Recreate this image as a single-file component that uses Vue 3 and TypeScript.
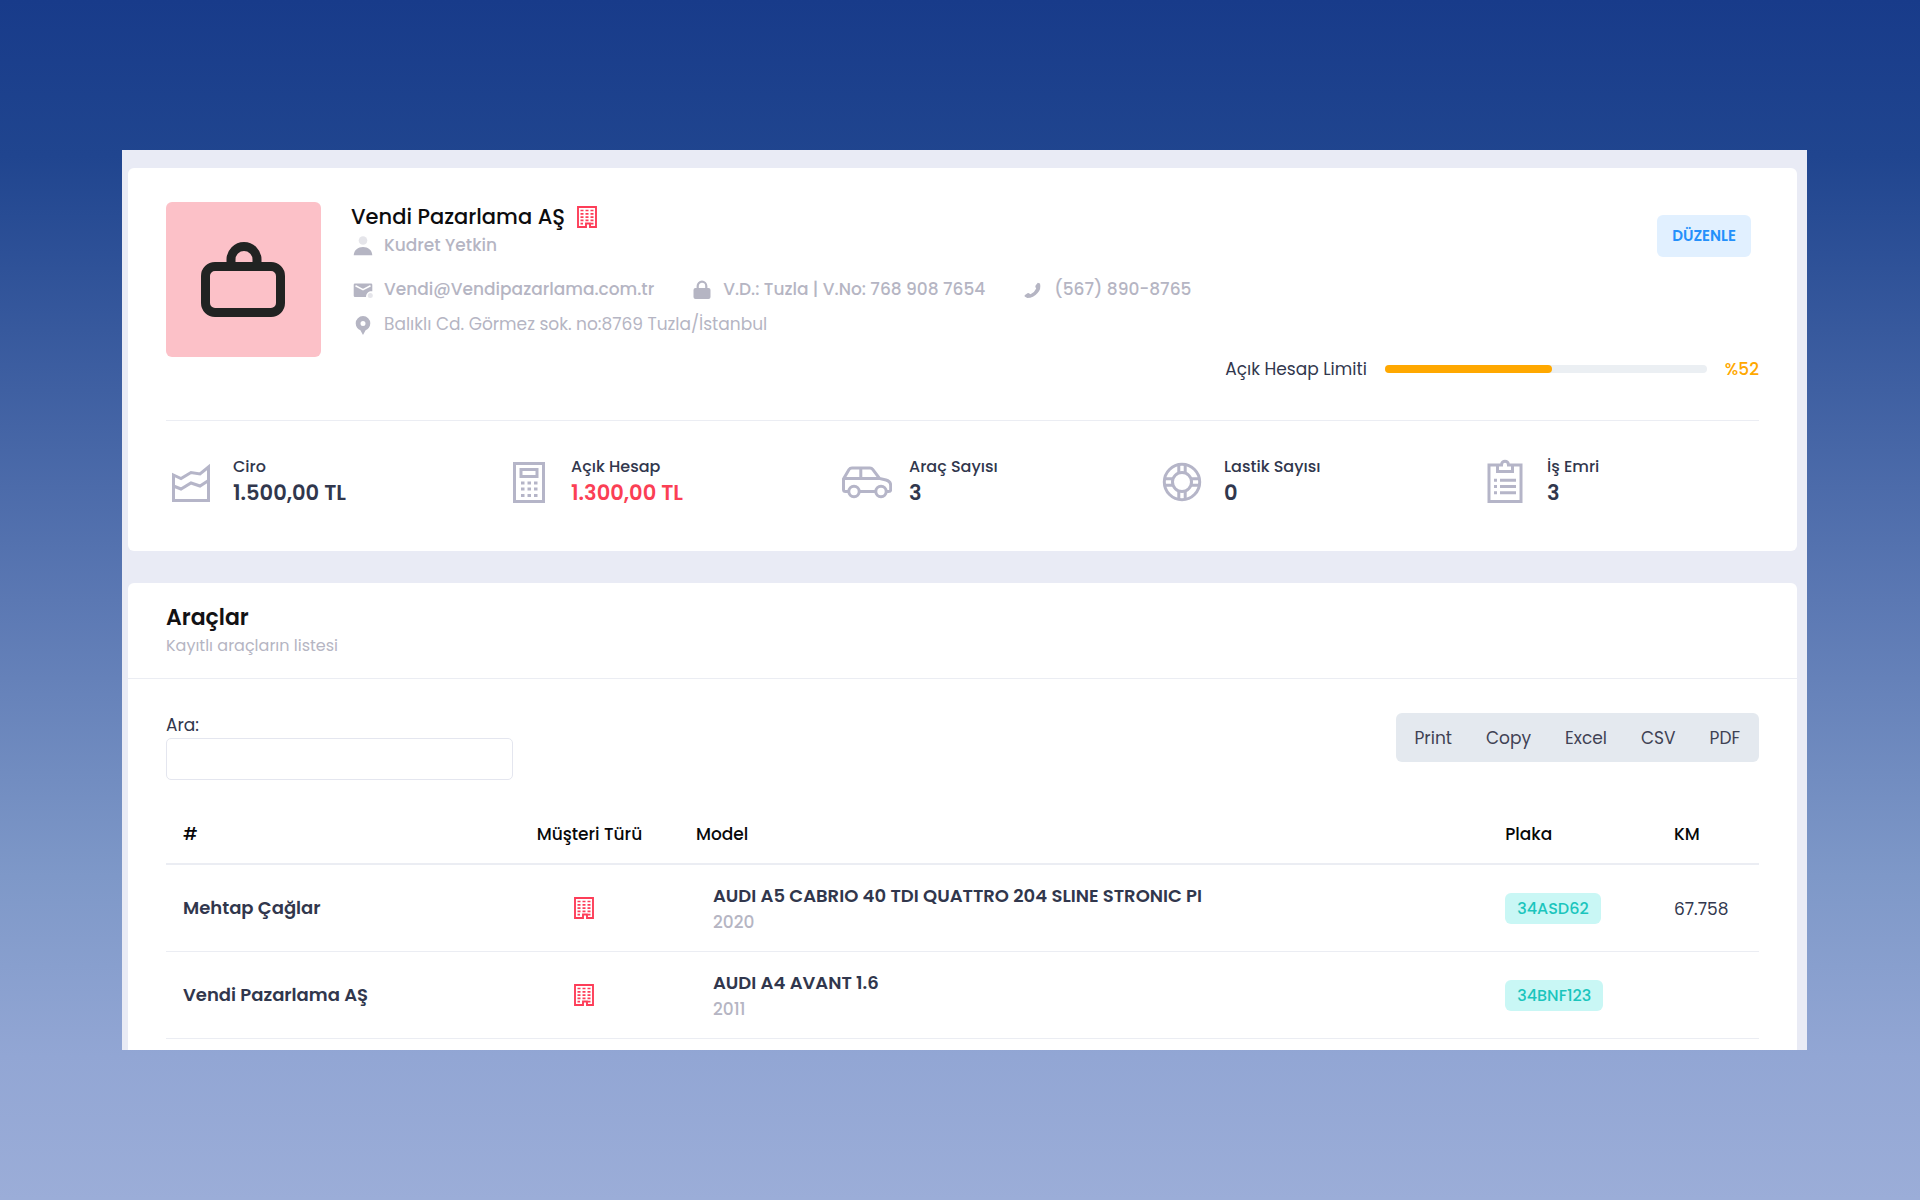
<script setup lang="ts">
import { ref } from 'vue'

interface Vehicle {
  owner: string
  model: string
  year: number
  plate: string
  km: string
}

const vehicles: Vehicle[] = [
  { owner: 'Mehtap Çağlar', model: 'AUDI A5 CABRIO 40 TDI QUATTRO 204 SLINE STRONIC PI', year: 2020, plate: '34ASD62', km: '67.758' },
  { owner: 'Vendi Pazarlama AŞ', model: 'AUDI A4 AVANT 1.6', year: 2011, plate: '34BNF123', km: '' },
]

const exportFormats: string[] = ['Print', 'Copy', 'Excel', 'CSV', 'PDF']
const usedLimit = ref<number>(52)
const search = ref<string>('')
</script>

<template>
  <div class="page">
    <svg class="defs" width="0" height="0" aria-hidden="true">
      <symbol id="building" viewBox="0 0 20 22">
        <path fill="none" stroke="currentColor" stroke-width="1.9" d="M1 1h18v20h-6v-3.500h-4V21H1z" />
        <path fill="none" stroke="currentColor" stroke-width="1.700" stroke-dasharray="3 2" d="M3.500 4.500h13M3.500 7.800h13M3.500 11.100h13M3.500 14.400h13" />
        <path fill="none" stroke="currentColor" stroke-width="1.700" d="M3.500 17.700h2.500M14 17.700h2.500" />
        <path stroke="#fff" stroke-width="2.200" d="M10 21h2" />
      </symbol>
    </svg>

    <main class="panel">
      <section class="card profile">
        <div class="head">
          <div class="avatar">
            <svg width="86" height="78" viewBox="0 0 86 78" fill="none" stroke="#212322" stroke-width="9" aria-hidden="true">
              <rect x="4.500" y="25.500" width="75" height="46" rx="9.500" />
              <path d="M30 25V18.500a13 13 0 0 1 26 0V25" />
            </svg>
          </div>
          <div class="details">
            <div class="top">
              <div class="info">
                <h1>
                  Vendi Pazarlama AŞ
                  <svg class="building" width="20" height="22" aria-hidden="true"><use href="#building" /></svg>
                </h1>
                <p class="line">
                  <svg class="glyph" viewBox="0 0 20 20" aria-hidden="true">
                    <circle cx="10" cy="4.500" r="4.300" opacity=".35" />
                    <path d="M.7 19.300C1 14 5 11 10 11s9 3 9.300 8.300z" />
                  </svg>
                  Kudret Yetkin
                </p>
                <div class="contacts">
                  <a class="line" href="mailto:Vendi@Vendipazarlama.com.tr">
                    <svg class="glyph" viewBox="0 0 20 20" aria-hidden="true">
                      <path d="M2 3.500h16q1.300 0 1.300 1.300v6.400c-3.500-.3-6 1.700-6.300 5.800H2q-1.300 0-1.300-1.300V4.800Q.7 3.500 2 3.500z" />
                      <path d="M2.500 5.800 10 9.600l7.500-3.800" fill="none" stroke="#fff" stroke-width="1.600" />
                      <circle cx="17.300" cy="15.500" r="2.500" opacity=".35" />
                    </svg>
                    Vendi@Vendipazarlama.com.tr
                  </a>
                  <span class="line">
                    <svg class="glyph" viewBox="0 0 20 20" aria-hidden="true">
                      <rect x="1.500" y="8" width="17" height="11" rx="2" />
                      <path d="M5.700 9V6a4.300 4.300 0 0 1 8.600 0v3" fill="none" stroke="currentColor" stroke-width="2.200" />
                    </svg>
                    V.D.: Tuzla | V.No: 768 908 7654
                  </span>
                  <a class="line" href="tel:5678908765">
                    <svg class="glyph" viewBox="0 0 20 20" aria-hidden="true">
                      <path d="M14.800 2.800 17 3.500q1.400 5.500-2.400 9.500-4.200 5-10.300 5L1.700 16.500q-.5-.7.3-1.400l2.500-1.800q.7-.4 1.400 0l1.600.9q4-1.500 5.700-5.600l-.8-1.700q-.2-.7.2-1.300z" />
                    </svg>
                    (567) 890-8765
                  </a>
                </div>
                <p class="line address">
                  <svg class="glyph" viewBox="0 0 20 20" aria-hidden="true">
                    <path fill-rule="evenodd" d="M10 1a7.300 7.300 0 0 1 7.300 7.300c0 3.700-2.200 5.700-4.700 7L10 20l-2.600-4.700c-2.500-1.300-4.700-3.300-4.700-7A7.300 7.300 0 0 1 10 1zm0 5a2.500 2.500 0 1 0 0 5 2.500 2.500 0 0 0 0-5z" />
                  </svg>
                  Balıklı Cd. Görmez sok. no:8769 Tuzla/İstanbul
                </p>
              </div>
              <button type="button" class="edit">DÜZENLE</button>
            </div>
            <div class="limit">
              <span id="limit-label">Açık Hesap Limiti</span>
              <div class="track" role="progressbar" aria-labelledby="limit-label" :aria-valuenow="usedLimit">
                <div class="fill" :style="{ width: usedLimit + '%' }"></div>
              </div>
              <strong>%{{ usedLimit }}</strong>
            </div>
          </div>
        </div>

        <div class="stats">
          <div class="stat">
            <svg class="stat-icon" viewBox="0 0 50 50" aria-hidden="true">
              <path d="M7.500 18v25.500h35V10l-8.500 7-9-1.500L15 21.500z M7.500 29l7.500 3 10-6 9 3 8.500-5.500" />
            </svg>
            <div><span class="label">Ciro</span><span class="value">1.500,00 TL</span></div>
          </div>
          <div class="stat">
            <svg class="stat-icon" viewBox="0 0 50 50" aria-hidden="true">
              <path d="M10.500 6.500h29v38h-29z M17 12.500h16v7H17z" />
              <path stroke-dasharray="3.500 3" d="M17 26h17M17 32h17M17 38.500h17" />
            </svg>
            <div><span class="label">Açık Hesap</span><span class="value danger">1.300,00 TL</span></div>
          </div>
          <div class="stat">
            <svg class="stat-icon" viewBox="0 0 50 50" aria-hidden="true">
              <path d="M6.500 34.500H3.500q-2 0-2-2V22l5.500-9.500q1-1.500 3-1.500h18q1.700 0 2.700 1.300L37.500 21.500l6.500 1.500q4.700 1.300 4.700 5.500v4q0 2-2 2h-2M17.500 34.500h16M1.500 21.500h36M18.800 11v10.500" />
              <circle cx="12" cy="34.500" r="5.200" /><circle cx="39" cy="34.500" r="5.200" />
            </svg>
            <div><span class="label">Araç Sayısı</span><span class="value">3</span></div>
          </div>
          <div class="stat">
            <svg class="stat-icon" viewBox="0 0 50 50" aria-hidden="true">
              <circle cx="25" cy="25" r="17.700" /><circle cx="25" cy="25" r="9.500" />
              <path d="M21.800 7.500v8.500M28.200 7.500v8.500M21.800 34v8.500M28.200 34v8.500M7.500 21.800H16M7.500 28.200H16M34 21.800h8.500M34 28.200h8.500" />
            </svg>
            <div><span class="label">Lastik Sayısı</span><span class="value">0</span></div>
          </div>
          <div class="stat">
            <svg class="stat-icon" viewBox="0 0 50 50" aria-hidden="true">
              <path d="M17 8H9v36.500h32V8h-8M17.500 8h4c0-5 7-5 7 0h4v6.500h-15z" />
              <path d="M14 23.200h3M20 23.200h16M14 29.500h3M20 29.500h16M14 35.800h3M20 35.800h16" />
            </svg>
            <div><span class="label">İş Emri</span><span class="value">3</span></div>
          </div>
        </div>
      </section>

      <section class="card vehicles">
        <header>
          <h2>Araçlar</h2>
          <p>Kayıtlı araçların listesi</p>
        </header>
        <div class="body">
          <div class="toolbar">
            <div class="search">
              <label for="search">Ara:</label>
              <input id="search" v-model="search" type="text" />
            </div>
            <div class="export">
              <button v-for="format in exportFormats" :key="format" type="button">{{ format }}</button>
            </div>
          </div>
          <table>
            <colgroup>
              <col class="c-owner" /><col class="c-type" /><col class="c-model" /><col class="c-plate" /><col class="c-km" />
            </colgroup>
            <thead>
              <tr><th>#</th><th>Müşteri Türü</th><th>Model</th><th>Plaka</th><th>KM</th></tr>
            </thead>
            <tbody>
              <tr v-for="vehicle in vehicles" :key="vehicle.plate">
                <td class="owner">{{ vehicle.owner }}</td>
                <td class="type"><svg class="building" width="20" height="22" role="img" aria-label="Kurumsal"><use href="#building" /></svg></td>
                <td>
                  <div class="model">
                    <span class="name">{{ vehicle.model }}</span>
                    <span class="year">{{ vehicle.year }}</span>
                  </div>
                </td>
                <td class="plate"><span class="badge">{{ vehicle.plate }}</span></td>
                <td>{{ vehicle.km }}</td>
              </tr>
            </tbody>
          </table>
        </div>
      </section>
    </main>
  </div>
</template>

<style>
body {
  margin: 0;
}
</style>

<style scoped>
.page {
  box-sizing: border-box;
  min-height: 100vh;
  padding: 150px 113px 140px 122px;
  background: linear-gradient(#183b8a 0%, #20458f 13%, #5b78b3 50%, #7e98c8 73%, #92a6d4 88%, #9badd8 100%);
  font-family: Poppins, Inter, sans-serif;
  font-size: 17px;
  line-height: 26px;
  color: #31374d;
}
.page * {
  box-sizing: border-box;
}
.defs {
  position: absolute;
}
h1,
h2,
p {
  margin: 0;
}
button,
input {
  font: inherit;
}
button {
  cursor: pointer;
}
.panel {
  display: flex;
  flex-direction: column;
  gap: 32px;
  padding: 18px 10px 0 6px;
  background: #e9ebf5;
}
.card {
  background: #fff;
  border-radius: 6px;
}
.building {
  flex: none;
  color: #fd3d58;
}

/* Customer profile */
.profile {
  padding: 34px 38px 43px;
}
.head {
  display: flex;
  gap: 30px;
}
.avatar {
  display: flex;
  flex: none;
  align-items: center;
  justify-content: center;
  width: 155px;
  height: 155px;
  border-radius: 6px;
  background: #fcc1c8;
}
.details {
  flex: 1;
}
.top {
  display: flex;
  align-items: flex-start;
  justify-content: space-between;
}
h1 {
  display: flex;
  align-items: center;
  gap: 12px;
  font-size: 21px;
  line-height: 30px;
  font-weight: 500;
  color: #0c0c0e;
}
.line {
  display: flex;
  align-items: center;
  gap: 11px;
  color: #b5b5c3;
  font-weight: 500;
  text-decoration: none;
  white-space: nowrap;
}
.glyph {
  flex: none;
  width: 20px;
  height: 20px;
  margin: 2px 0 0 2px;
  fill: currentColor;
}
.contacts {
  display: flex;
  gap: 36px;
  margin-top: 18px;
}
.address {
  margin-top: 9px;
  font-weight: 400;
}
.edit {
  height: 42px;
  margin: 13px 8px 0 0;
  padding: 0 15px;
  border: 0;
  border-radius: 6px;
  background: #e1f0ff;
  color: #2490fb;
  font-size: 15px;
  font-weight: 600;
}
.limit {
  display: flex;
  align-items: center;
  justify-content: flex-end;
  gap: 18px;
  margin-top: 19px;
}
.track {
  width: 322px;
  height: 8px;
  border-radius: 4px;
  background: #ebeff3;
}
.fill {
  height: 8px;
  border-radius: 4px;
  background: #ffa800;
}
.limit strong {
  font-weight: 500;
  color: #ffa800;
}
.stats {
  display: grid;
  grid-template-columns: 338fr 338fr 315fr 323fr 279fr;
  margin-top: 38px;
  padding-top: 34px;
  border-top: 1px solid #ebedf3;
}
.stat {
  display: flex;
  align-items: center;
  gap: 17px;
}
.stat-icon {
  flex: none;
  width: 50px;
  height: 50px;
  fill: none;
  stroke: #b5b5c8;
  stroke-width: 3;
}
.label,
.value {
  display: block;
}
.label {
  font-size: 16px;
  line-height: 23px;
  font-weight: 500;
}
.value {
  font-size: 21px;
  line-height: 30px;
  font-weight: 600;
}
.danger {
  color: #fb3f55;
}

/* Vehicle list */
.vehicles {
  border-radius: 6px 6px 0 0;
}
header {
  padding: 21px 38px 21px;
  border-bottom: 1px solid #ebedf3;
}
h2 {
  font-size: 22px;
  line-height: 28px;
  font-weight: 600;
  color: #121214;
}
header p {
  padding-top: 3px;
  font-size: 16px;
  line-height: 22px;
  font-weight: 400;
  color: #b5b5c3;
}
.body {
  padding: 34px 38px 11px;
}
.toolbar {
  display: flex;
  align-items: flex-start;
  justify-content: space-between;
}
.search {
  display: flex;
  flex-direction: column;
  width: 347px;
  line-height: 24px;
}
.search input {
  height: 42px;
  margin-top: 1px;
  padding: 0 14px;
  border: 1px solid #e4e6ef;
  border-radius: 5px;
  outline: 0;
  background: #fff;
  color: inherit;
}
.export {
  display: flex;
  height: 49px;
  padding: 0 2px;
  border-radius: 6px;
  background: #e4e9ef;
}
.export button {
  padding: 0 17px;
  border: 0;
  background: none;
  color: #3f4254;
}
table {
  width: 100%;
  margin-top: 23px;
  border-collapse: separate;
  border-spacing: 0;
  table-layout: fixed;
}
.c-owner {
  width: 22.2%;
}
.c-type {
  width: 10%;
}
.c-model {
  width: 50.8%;
}
.c-plate {
  width: 10.6%;
}
.c-km {
  width: 6.4%;
}
th,
td {
  padding: 2px 0 0 17px;
  text-align: left;
  vertical-align: middle;
  white-space: nowrap;
}
th {
  height: 62px;
  border-bottom: 2px solid #ebedf3;
  font-weight: 500;
  color: #08080a;
}
td {
  height: 87px;
  border-bottom: 1px solid #ebedf3;
}
.owner,
.name {
  font-size: 18px;
  font-weight: 600;
}
.owner,
.type,
.plate {
  padding-top: 0;
}
.type .building {
  display: block;
  margin-left: 37px;
}
.model {
  padding-left: 17px;
}
.name,
.year {
  display: block;
}
.year {
  font-weight: 500;
  color: #b5b5c3;
}
.badge {
  display: inline-block;
  padding: 0 12px;
  border-radius: 6px;
  background: #c9f7f5;
  color: #1bc5bd;
  font-size: 16px;
  line-height: 31px;
  font-weight: 500;
}
</style>
